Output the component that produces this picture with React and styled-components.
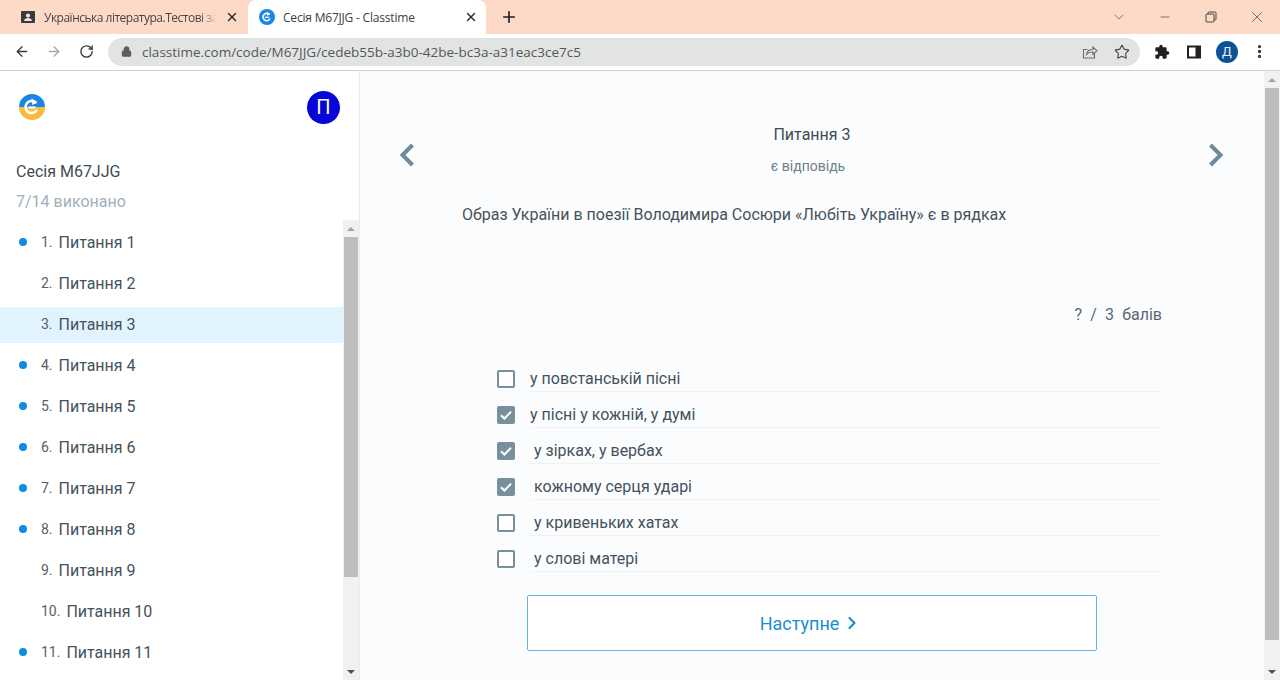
import React from "react";
import styled, { createGlobalStyle } from "styled-components";
import { ChevronDown, Minus, X, Plus, ArrowLeft, ArrowRight, RotateCw, Lock, Star, EllipsisVertical, ChevronRight } from "lucide-react";

const GlobalStyle = createGlobalStyle`
  html, body { margin: 0; padding: 0; height: 680px; overflow: hidden; background: #fff; }
  * { box-sizing: border-box; }
  #root { height: 680px; }
`;

const Page = styled.div`
  height: 680px;
  display: flex;
  flex-direction: column;
  font-family: Roboto, "Liberation Sans", sans-serif;
  color: #3d4a54;
`;

const TabStrip = styled.div`
  height: 34px;
  flex: none;
  background: #fdd9c7;
  display: flex;
  align-items: flex-end;
  padding-left: 8px;
  font-family: "Open Sans", "Noto Sans", sans-serif;
  font-size: 12px;
`;

const Tab = styled.div`
  width: ${(p) => p.$width}px;
  height: 34px;
  display: flex;
  align-items: center;
  gap: 8px;
  padding: 0 ${(p) => p.$padRight}px 0 ${(p) => p.$pad}px;
  border-radius: 8px 8px 0 0;
  background: ${(p) => (p.$active ? "#fff" : "transparent")};
  color: ${(p) => (p.$active ? "#3c4043" : "#4a4440")};
`;

const TabTitle = styled.span`
  flex: 1;
  overflow: hidden;
  white-space: nowrap;
  letter-spacing: ${(p) => (p.$fade ? "-0.5px" : "-0.2px")};
  mask-image: ${(p) => (p.$fade ? "linear-gradient(90deg, #000 90%, transparent)" : "none")};
`;

const NewTab = styled.div`
  width: 28px;
  height: 34px;
  margin-left: 9px;
  display: flex;
  align-items: center;
  justify-content: center;
  color: #1f1f1f;
`;

const WindowControls = styled.div`
  margin-left: auto;
  height: 34px;
  display: flex;
  align-items: center;
  color: #4c4540;
`;

const WinButton = styled.div`
  width: 46px;
  height: 30px;
  display: flex;
  align-items: center;
  justify-content: center;
`;

const Toolbar = styled.div`
  height: 37px;
  flex: none;
  background: #fff;
  border-bottom: 1px solid #d0d0d0;
  display: flex;
  align-items: center;
  padding: 0 0 1px 14px;
  color: #2f3033;
`;

const NavButton = styled.div`
  width: 16px;
  height: 16px;
  margin-right: 16px;
  display: flex;
  align-items: center;
  justify-content: center;
  color: ${(p) => (p.$off ? "#a5a7aa" : "#3a3b3d")};
`;

const Omnibox = styled.div`
  width: 1032px;
  height: 28px;
  margin-left: -2px;
  border-radius: 14px;
  background: #e2e3e3;
  display: flex;
  align-items: center;
  padding: 0 10px 0 13px;
  color: #5c5e61;
`;

const Url = styled.span`
  margin-left: 10px;
  font-family: "Open Sans", "Noto Sans", sans-serif;
  font-size: 13.5px;
  color: #55585b;
  white-space: nowrap;
`;

const OmniIcons = styled.div`
  margin-left: auto;
  display: flex;
  align-items: center;
  gap: 16px;
`;

const ToolIcons = styled.div`
  display: flex;
  align-items: center;
  margin-left: 14px;
  gap: 16px;
`;

const Avatar = styled.div`
  width: 22px;
  height: 22px;
  margin: 0 -3px 0 -2px;
  border-radius: 50%;
  background: #0b5394;
  color: #e6eef6;
  font-size: 13px;
  display: flex;
  align-items: center;
  justify-content: center;
`;

const Body = styled.div`
  flex: 1;
  min-height: 0;
  display: flex;
`;

const Sidebar = styled.aside`
  width: 360px;
  flex: none;
  background: #fff;
  border-right: 1px solid #e9ebee;
  display: flex;
  flex-direction: column;
`;

const SideHeader = styled.div`
  height: 149px;
  flex: none;
  padding: 19px 19px 0 16px;
`;

const LogoRow = styled.div`
  height: 34px;
  display: flex;
  align-items: center;
  justify-content: space-between;
  padding-left: 3px;
`;

const UserBadge = styled.div`
  width: 33px;
  height: 33px;
  border-radius: 50%;
  background: #0606d8;
  color: #fff;
  font-size: 20px;
  display: flex;
  align-items: center;
  justify-content: center;
`;

const SessionName = styled.div`
  margin-top: 33px;
  font-size: 16px;
  line-height: 30px;
  color: #3f4b54;
`;

const Progress = styled.div`
  font-size: 16px;
  line-height: 30px;
  color: #9fb0ba;
`;

const SideScroll = styled.div`
  flex: 1;
  min-height: 0;
  display: flex;
`;

const QuestionList = styled.div`
  flex: 1;
  overflow: hidden;
  padding-top: 5px;
`;

const QuestionRow = styled.div`
  height: 36px;
  margin-bottom: 5px;
  padding: 0 0 2px 41px;
  display: flex;
  align-items: center;
  position: relative;
  background: ${(p) => (p.$current ? "#e1f3fd" : "transparent")};
  font-size: 16px;
  letter-spacing: -0.02px;
  color: #46525b;
`;

const Dot = styled.span`
  position: absolute;
  left: 19px;
  top: 13px;
  width: 8px;
  height: 8px;
  border-radius: 50%;
  background: #0e8ce4;
`;

const Num = styled.span`
  font-size: 14px;
  margin-right: 6px;
  color: #55616a;
`;

const Track = styled.div`
  width: 16px;
  flex: none;
  background: #f1f1f1;
  display: flex;
  flex-direction: column;
  align-items: center;
`;

const Arrow = styled.div`
  height: 17px;
  flex: none;
  display: flex;
  align-items: center;
  justify-content: center;
  &::before {
    content: "";
    border-left: 4px solid transparent;
    border-right: 4px solid transparent;
    border-${(p) => (p.$down ? "top" : "bottom")}: 4px solid ${(p) => (p.$down ? "#505050" : "#a3a3a3")};
  }
`;

const Thumb = styled.div`
  width: 14px;
  height: ${(p) => p.$height}px;
  flex: none;
  background: #bdbdbd;
`;

const Spacer = styled.div`
  flex: 1;
`;

const Main = styled.main`
  flex: 1;
  min-width: 0;
  background: #fbfcfe;
  overflow: hidden;
  position: relative;
`;

const Center = styled.div`
  width: 700px;
  margin: 0 auto;
  display: flex;
  flex-direction: column;
`;

const PrevNext = styled.div`
  position: absolute;
  top: 71px;
  ${(p) => (p.$right ? "right: 40px;" : "left: 39px;")}
  color: #6f8a99;
  display: flex;
`;

const QuestionTitle = styled.div`
  margin-top: 52px;
  text-align: center;
  font-size: 16px;
  line-height: 24px;
  color: #3f4b54;
`;

const QuestionStatus = styled.div`
  margin-top: 7px;
  padding-right: 8px;
  text-align: center;
  font-size: 14px;
  line-height: 24px;
  color: #6f7f89;
`;

const QuestionText = styled.div`
  margin-top: 25px;
  font-size: 16px;
  line-height: 24px;
  color: #46525b;
`;

const Score = styled.div`
  margin-top: 76px;
  text-align: right;
  font-size: 16px;
  line-height: 24px;
  word-spacing: 4.2px;
  color: #5a6872;
`;

const Options = styled.div`
  margin-top: 34px;
  padding-left: 35px;
  display: flex;
  flex-direction: column;
`;

const Option = styled.div`
  height: 36px;
  display: flex;
  align-items: center;
  gap: 15px;
`;

const Box = styled.span`
  width: 18px;
  height: 18px;
  flex: none;
  border-radius: 2px;
  border: 2px solid #78909c;
  background: ${(p) => (p.$checked ? "#78909c" : "#fff")};
  display: flex;
  align-items: center;
  justify-content: center;
`;

const OptionText = styled.span`
  flex: 1;
  height: 26px;
  line-height: 26px;
  border-bottom: 1px solid #f0f2f4;
  padding-left: ${(p) => p.$indent}px;
  font-size: 16px;
  color: #46525b;
`;

const NextButton = styled.button`
  align-self: center;
  width: 570px;
  height: 56px;
  margin-top: 18px;
  background: #fff;
  border: 1px solid #64b5e3;
  border-radius: 2px;
  color: #1b8ed2;
  font-family: inherit;
  font-size: 18px;
  display: flex;
  align-items: center;
  justify-content: center;
  gap: 3px;
  padding: 0 2px 0 0;
`;

const ClasstimeGlyph = ({ size, top, bottom }) => (
  <svg width={size} height={size} viewBox="0 0 26 26">
    <defs>
      <clipPath id={`round-${size}`}>
        <circle cx="13" cy="13" r="13" />
      </clipPath>
    </defs>
    <g clipPath={`url(#round-${size})`}>
      <rect width="26" height="13" fill={top} />
      <rect y="13" width="26" height="13" fill={bottom} />
    </g>
    <path d="M17.5 16.5a6 6 0 1 1-1-8" fill="none" stroke="#fff" strokeWidth="2.6" strokeLinecap="round" />
    <path d="M12.5 4.5l5.5 3.2-4.6 3.5z" fill="#fff" />
    <path d="M9.5 13.5h7" stroke="#fff" strokeWidth="2.2" />
  </svg>
);

const AccountTabIcon = () => (
  <svg width="16" height="16" viewBox="0 0 16 16">
    <rect x="1" y="2" width="14" height="12" rx="1" fill="#3a3a3c" />
    <circle cx="8" cy="6.6" r="2.1" fill="#f3e3da" />
    <path d="M4 12c.4-2.2 2-3 4-3s3.600.8 4 3z" fill="#f3e3da" />
  </svg>
);

const ShareIcon = () => (
  <svg width="16" height="16" viewBox="0 0 16 16" fill="none" stroke="#6b6d70" strokeWidth="1.1">
    <path d="M12.500 9.500v4.500H1.500V5.500h4" />
    <path d="M4.500 10.500c.5-3.500 3-5 6.500-5V3l4 3.700-4 3.700V8c-2.800 0-5 .7-6.500 2.500z" />
  </svg>
);

const PuzzleIcon = () => (
  <svg width="16" height="16" viewBox="0 0 24 24" fill="#202124">
    <path d="M20.500 11H19V7a2 2 0 0 0-2-2h-4V3.500a2.500 2.500 0 0 0-5 0V5H4a2 2 0 0 0-2 2v3.800h1.500a2.700 2.700 0 0 1 0 5.400H2V20a2 2 0 0 0 2 2h3.800v-1.500a2.700 2.700 0 0 1 5.400 0V22H17a2 2 0 0 0 2-2v-4h1.500a2.500 2.500 0 0 0 0-5z" />
  </svg>
);

const SidePanelIcon = () => (
  <svg width="16" height="16" viewBox="0 0 16 16">
    <rect x="1" y="1.500" width="14" height="13" fill="#202124" />
    <rect x="3" y="3.500" width="6.500" height="9" fill="#fff" />
  </svg>
);

const RestoreIcon = () => (
  <svg width="12" height="12" viewBox="0 0 12 12" fill="none" stroke="#4c4540" strokeWidth="1">
    <rect x="1" y="3" width="8" height="8" rx="1" />
    <path d="M3 3V2a1 1 0 0 1 1-1h6a1 1 0 0 1 1 1v6a1 1 0 0 1-1 1H9" />
  </svg>
);

const CheckMark = () => (
  <svg width="14" height="14" viewBox="0 0 14 14" fill="none" stroke="#fff" strokeWidth="2">
    <path d="M2 7.200l3.400 3.300L12 3.800" />
  </svg>
);

const questions = [
  { n: 1, done: true },
  { n: 2 },
  { n: 3, current: true },
  { n: 4, done: true },
  { n: 5, done: true },
  { n: 6, done: true },
  { n: 7, done: true },
  { n: 8, done: true },
  { n: 9 },
  { n: 10 },
  { n: 11, done: true },
];

const answers = [
  { text: "у повстанській пісні", checked: false, indent: 0 },
  { text: "у пісні у кожній, у думі", checked: true, indent: 0 },
  { text: "у зірках, у вербах", checked: true, indent: 4 },
  { text: "кожному серця ударі", checked: true, indent: 4 },
  { text: "у кривеньких хатах", checked: false, indent: 4 },
  { text: "у слові матері", checked: false, indent: 4 },
];

export default function App() {
  return (
    <Page>
      <GlobalStyle />
      <TabStrip>
        <Tab $width={240} $pad={12} $padRight={9}>
          <AccountTabIcon />
          <TabTitle $fade>Українська література.Тестові за</TabTitle>
          <X size={14} strokeWidth={2.4} color="#2b2b2b" />
        </Tab>
        <Tab $width={238} $pad={11} $padRight={8} $active>
          <ClasstimeGlyph size={16} top="#1a84e8" bottom="#1a84e8" />
          <TabTitle>Сесія M67JJG - Classtime</TabTitle>
          <X size={14} strokeWidth={2.4} color="#2b2b2b" />
        </Tab>
        <NewTab>
          <Plus size={18} strokeWidth={2.2} />
        </NewTab>
        <WindowControls>
          <WinButton>
            <ChevronDown size={16} strokeWidth={1} />
          </WinButton>
          <WinButton>
            <Minus size={14} strokeWidth={1.2} />
          </WinButton>
          <WinButton>
            <RestoreIcon />
          </WinButton>
          <WinButton>
            <X size={18} strokeWidth={1} />
          </WinButton>
        </WindowControls>
      </TabStrip>

      <Toolbar>
        <NavButton>
          <ArrowLeft size={17} strokeWidth={2} />
        </NavButton>
        <NavButton $off>
          <ArrowRight size={17} strokeWidth={2} />
        </NavButton>
        <NavButton>
          <RotateCw size={15} strokeWidth={2.2} />
        </NavButton>
        <Omnibox>
          <Lock size={11} strokeWidth={2.6} fill="#5c5e61" />
          <Url>classtime.com/code/M67JJG/cedeb55b-a3b0-42be-bc3a-a31eac3ce7c5</Url>
          <OmniIcons>
            <ShareIcon />
            <Star size={16} strokeWidth={1.7} color="#45474a" />
          </OmniIcons>
        </Omnibox>
        <ToolIcons>
          <PuzzleIcon />
          <SidePanelIcon />
          <Avatar>Д</Avatar>
          <EllipsisVertical size={17} strokeWidth={2.6} color="#2f3033" />
        </ToolIcons>
      </Toolbar>

      <Body>
        <Sidebar>
          <SideHeader>
            <LogoRow>
              <ClasstimeGlyph size={26} top="#1a84e8" bottom="#f7bb3d" />
              <UserBadge>П</UserBadge>
            </LogoRow>
            <SessionName>Сесія M67JJG</SessionName>
            <Progress>7/14 виконано</Progress>
          </SideHeader>
          <SideScroll>
            <QuestionList>
              {questions.map((q) => (
                <QuestionRow key={q.n} $current={q.current}>
                  {q.done && <Dot />}
                  <Num>{q.n}.</Num>
                  Питання {q.n}
                </QuestionRow>
              ))}
            </QuestionList>
            <Track>
              <Arrow />
              <Thumb $height={340} />
              <Spacer />
              <Arrow $down />
            </Track>
          </SideScroll>
        </Sidebar>

        <Main>
          <PrevNext>
            <svg width="16" height="26" viewBox="0 0 16 26" fill="none" stroke="currentColor" strokeWidth="4">
              <path d="M13.500 3L3.500 13l10 10" />
            </svg>
          </PrevNext>
          <PrevNext $right>
            <svg width="16" height="26" viewBox="0 0 16 26" fill="none" stroke="currentColor" strokeWidth="4">
              <path d="M2.500 3l10 10-10 10" />
            </svg>
          </PrevNext>
          <Center>
            <QuestionTitle>Питання 3</QuestionTitle>
            <QuestionStatus>є відповідь</QuestionStatus>
            <QuestionText>Образ України в поезії Володимира Сосюри «Любіть Україну» є в рядках</QuestionText>
            <Score>? / 3 балів</Score>
            <Options>
              {answers.map((a) => (
                <Option key={a.text}>
                  <Box $checked={a.checked}>{a.checked && <CheckMark />}</Box>
                  <OptionText $indent={a.indent}>{a.text}</OptionText>
                </Option>
              ))}
            </Options>
            <NextButton>
              Наступне
              <ChevronRight size={20} strokeWidth={2.6} />
            </NextButton>
          </Center>
        </Main>

        <Track>
          <Arrow />
          <Thumb $height={552} />
          <Spacer />
          <Arrow $down />
        </Track>
      </Body>
    </Page>
  );
}
